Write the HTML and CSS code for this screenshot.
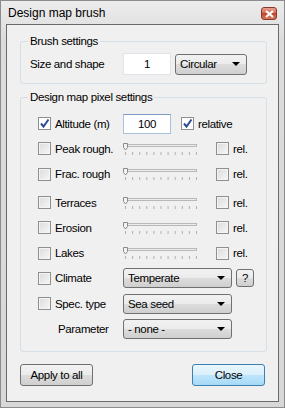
FILE: index.html
```html
<!DOCTYPE html>
<html lang="en">
<head>
<meta charset="UTF-8" />
<title>Design map brush</title>
<link rel="stylesheet" href="styles.css">
</head>
<body>
<div class="window">
  <div class="titlebar">
    <span class="title">Design map brush</span>
    <span class="close-x">
      <svg width="9" height="8" viewBox="0 0 9 8"><path d="M1,1 L8,7 M8,1 L1,7" stroke="#fff" stroke-width="2.2" /></svg>
    </span>
  </div>

  <div class="client">
    <fieldset class="group group-brush">
      <legend>Brush settings</legend>
      <div class="row">
        <span class="lbl lbl-size">Size and shape</span>
        <span class="edit edit-size">1</span>
        <div class="combo combo-shape"><span>Circular</span><i class="arrow"></i></div>
      </div>
    </fieldset>

    <fieldset class="group group-pixel">
      <legend>Design map pixel settings</legend>

      <div class="prow">
        <div class="first"><span class="chk on"><svg width="11" height="11" viewBox="0 0 11 11"><path d="M2,5.5 L4.5,8.5 L9.5,1.5" fill="none" stroke="#2c4c96" stroke-width="2" /></svg></span>Altitude (m)</div>
        <span class="edit edit-alt">100</span>
        <div class="rel rel-wide"><span class="chk on"><svg width="11" height="11" viewBox="0 0 11 11"><path d="M2,5.5 L4.5,8.5 L9.5,1.5" fill="none" stroke="#2c4c96" stroke-width="2" /></svg></span>relative</div>
      </div>

      <div class="prow">
        <div class="first"><span class="chk"></span>Peak rough.</div>
        <div class="slider"></div>
        <div class="rel"><span class="chk"></span>rel.</div>
      </div>

      <div class="prow">
        <div class="first"><span class="chk"></span>Frac. rough</div>
        <div class="slider"></div>
        <div class="rel"><span class="chk"></span>rel.</div>
      </div>

      <div class="prow prow-gap">
        <div class="first"><span class="chk"></span>Terraces</div>
        <div class="slider"></div>
        <div class="rel"><span class="chk"></span>rel.</div>
      </div>

      <div class="prow">
        <div class="first"><span class="chk"></span>Erosion</div>
        <div class="slider"></div>
        <div class="rel"><span class="chk"></span>rel.</div>
      </div>

      <div class="prow">
        <div class="first"><span class="chk"></span>Lakes</div>
        <div class="slider"></div>
        <div class="rel"><span class="chk"></span>rel.</div>
      </div>

      <div class="prow">
        <div class="first"><span class="chk"></span>Climate</div>
        <div class="combo combo-wide"><span>Temperate</span><i class="arrow"></i></div>
        <span class="btn btn-help">?</span>
      </div>

      <div class="prow">
        <div class="first"><span class="chk"></span>Spec. type</div>
        <div class="combo combo-wide"><span>Sea seed</span><i class="arrow"></i></div>
      </div>

      <div class="prow">
        <div class="first first-param">Parameter</div>
        <div class="combo combo-wide"><span>- none -</span><i class="arrow"></i></div>
      </div>
    </fieldset>

    <div class="buttons">
      <span class="btn btn-big">Apply to all</span>
      <span class="btn btn-big btn-default">Close</span>
    </div>
  </div>
</div>

<script>
  // trackbar ticks + thumb, same for every slider row
  const sliderSvg =
    '<svg width="78" height="16" viewBox="0 0 78 16">' +
    '<rect x="4.5" y="3.5" width="71" height="2" fill="#ececec" stroke="#b8b8b8" />' +
    '<path d="M2.5,2.5 h4 v4 l-2,2.5 l-2,-2.5 z" fill="#f4f4f4" stroke="#8a8a8a" />' +
    (function () {
      let t = "";
      for (let i = 0; i < 11; i++) {
        const x = 4.5 + i * 7.1;
        t += '<line x1="' + x + '" y1="11" x2="' + x + '" y2="14" stroke="#b0b0b0" />';
      }
      return t;
    })() +
    '</svg>';
  document.querySelectorAll(".slider").forEach(s => { s.innerHTML = sliderSvg; });
</script>
</body>
</html>
```

FILE: styles.css
```css
* { box-sizing: border-box; }
html, body { margin: 0; padding: 0; }
body {
  width: 285px; height: 408px;
  font-family: "Liberation Sans", Arial, sans-serif;
  font-size: 11.5px; letter-spacing: -0.35px; color: #000;
  background: #d6d6d6;
}

.window {
  width: 285px; height: 408px;
  border: 1px solid #8c8c8c;
  background: linear-gradient(#ececec, #dcdcdc 40px, #d8d8d8);
  padding: 0 5px 6px 5px;
}

.titlebar { height: 23px; display: flex; align-items: center; justify-content: space-between; }
.title { font-size: 12px; letter-spacing: 0; padding-left: 2px; padding-top: 1px; }
.close-x {
  width: 16px; height: 13px; margin-right: 2px; margin-top: 2px;
  display: flex; align-items: center; justify-content: center;
  border: 1px solid #8a3a2c; border-radius: 3px;
  background: linear-gradient(#e9a08f, #d3644c 50%, #c4452c 50%, #d8775c);
}
.close-x svg { display: block; }

.client {
  height: 378px;
  border: 1px solid #6a6a6a;
  background: #f0f0f0;
  padding-top: 9px;
}

.group {
  margin: 0 11px 0 13px;
  border: 1px solid #d5dfe5;
  border-radius: 3px;
  padding: 5px 6px 8px 6px;
}
.group legend { padding: 0 2px; line-height: 14px; margin-left: 1px; }
.group-pixel { margin-top: 6px; padding: 7px 0 9px 0; }
.group-pixel legend { margin-left: 7px; }

.row { display: flex; align-items: center; height: 22px; }
.lbl-size { width: 96px; padding-left: 3px; }

.edit {
  display: flex; align-items: center; justify-content: center;
  background: #fff; border: 1px solid #e2e3ea;
}
.edit-size { width: 48px; height: 22px; }
.edit-alt { width: 48px; height: 20px; border-color: #a9c1dc; border-top-color: #7b9ac2; }

.combo {
  display: flex; align-items: center; justify-content: space-between;
  height: 21px; padding: 0 6px 0 4px;
  border: 1px solid #707070; border-radius: 3px;
  background: linear-gradient(#f2f2f2, #ebebeb 50%, #dddddd 50%, #cfcfcf);
}
.combo-shape { width: 72px; margin-left: 4px; }
.combo-wide { width: 109px; height: 20px; }
.arrow {
  width: 0; height: 0;
  border-left: 4px solid transparent; border-right: 4px solid transparent;
  border-top: 4px solid #000;
}

.prow { display: flex; align-items: center; height: 25.3px; padding-left: 17px; }
.prow-gap { margin-top: 3px; }
.first { display: flex; align-items: center; width: 85px; }
.first-param { padding-left: 20px; }

.chk {
  width: 13px; height: 13px; margin-right: 4px; flex: none;
  display: flex; align-items: center; justify-content: center;
  border: 1px solid #8e8f8f;
  background: linear-gradient(135deg, #dcdcdc, #f6f6f6);
  box-shadow: inset 0 0 0 1px #f4f4f4;
}
.chk.on { background: #fff; box-shadow: inset 0 0 0 1px #fff; }

.rel { display: flex; align-items: center; margin-left: 17px; }
.rel-wide { margin-left: 10px; }
.slider { width: 78px; height: 16px; margin-left: -2px; }
.slider svg { display: block; }

.btn {
  display: flex; align-items: center; justify-content: center;
  border: 1px solid #707070; border-radius: 3px;
  background: linear-gradient(#f2f2f2, #ebebeb 50%, #dddddd 50%, #cfcfcf);
}
.btn-help { width: 18px; height: 18px; margin-left: 4px; }

.buttons { display: flex; justify-content: space-between; padding: 12px 13px 0 13px; }
.btn-big { width: 73px; height: 22px; }
.btn-default {
  border-color: #3c7fb1;
  background: linear-gradient(#eaf6fd, #d9f0fc 50%, #bee6fd 50%, #a7d9f5);
}
```
